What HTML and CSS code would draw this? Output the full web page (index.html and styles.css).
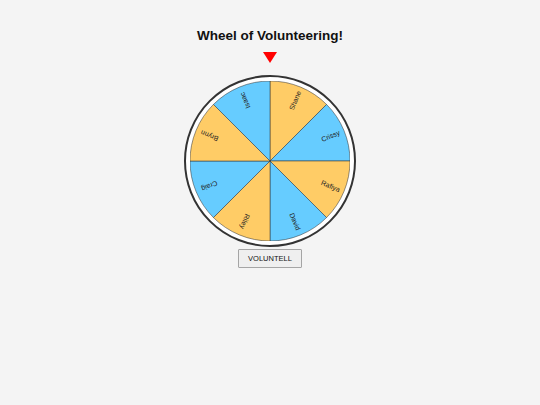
FILE: index.html
```html
<!doctype html>
<html lang="en">
	<head>
		<title>Wheel of Volunteering</title>
		<link rel="stylesheet" href="styles.css">
	</head>
	<body>
		<div class="app">
			<h1>Wheel of Volunteering!</h1>
			<div class="pointer"></div>

			<div class="wheel-frame">
				<svg class="wheel" viewBox="-80 -80 160 160" width="160" height="160">
					<g class="slices">
						<path class="orange" d="M0 0 L0 -80 A80 80 0 0 1 56.569 -56.569 Z"/>
						<path class="blue" d="M0 0 L56.569 -56.569 A80 80 0 0 1 80 0 Z"/>
						<path class="orange" d="M0 0 L80 0 A80 80 0 0 1 56.569 56.569 Z"/>
						<path class="blue" d="M0 0 L56.569 56.569 A80 80 0 0 1 0 80 Z"/>
						<path class="orange" d="M0 0 L0 80 A80 80 0 0 1 -56.569 56.569 Z"/>
						<path class="blue" d="M0 0 L-56.569 56.569 A80 80 0 0 1 -80 0 Z"/>
						<path class="orange" d="M0 0 L-80 0 A80 80 0 0 1 -56.569 -56.569 Z"/>
						<path class="blue" d="M0 0 L-56.569 -56.569 A80 80 0 0 1 0 -80 Z"/>
					</g>
					<!-- names sit in the middle of each slice, reading outwards -->
					<g class="names">
						<text transform="rotate(-67.5) translate(65.5 0)">Shane</text>
						<text transform="rotate(-22.5) translate(65.5 0)">Crissy</text>
						<text transform="rotate(22.5) translate(65.5 0)">Rafiya</text>
						<text transform="rotate(67.5) translate(65.5 0)">David</text>
						<text transform="rotate(112.5) translate(65.5 0)">Riley</text>
						<text transform="rotate(157.5) translate(65.5 0)">Craig</text>
						<text transform="rotate(202.5) translate(65.5 0)">Brynn</text>
						<text transform="rotate(247.5) translate(65.5 0)">Isaac</text>
					</g>
				</svg>
			</div>

			<button class="spin" type="button">VOLUNTELL</button>
		</div>
	</body>
</html>
```

FILE: styles.css
```css
body {
	margin: 0;
	background: #f4f4f4;
	font-family: "Liberation Sans", Arial, sans-serif;
	color: #111;
}

.app {
	display: flex;
	flex-direction: column;
	align-items: center;
	padding-top: 28px;
}

h1 {
	margin: 0;
	font-size: 13.5px;
	line-height: 16px;
	font-weight: bold;
}

.pointer {
	width: 0;
	height: 0;
	margin-top: 8px;
	border-left: 7.5px solid transparent;
	border-right: 7.5px solid transparent;
	border-top: 11px solid #f00;
}

.wheel-frame {
	box-sizing: border-box;
	width: 172px;
	height: 172px;
	margin-top: 12px;
	padding: 3.5px;
	border: 2.5px solid #333;
	border-radius: 50%;
	background: #fff;
}

.wheel {
	display: block;
}

.slices path {
	stroke: rgba(50, 50, 50, 0.75);
	stroke-width: 0.7;
}

.orange {
	fill: #ffcc66;
}

.blue {
	fill: #66ccff;
}

.names text {
	font-family: "Liberation Sans", Arial, sans-serif;
	font-size: 7px;
	fill: #222;
	text-anchor: middle;
	dominant-baseline: central;
}

.spin {
	margin-top: 2px;
	padding: 4px 9px;
	font-family: "Liberation Sans", Arial, sans-serif;
	font-size: 7.5px;
	line-height: 9px;
	color: #111;
	background: #efefef;
	border: 1px solid #a5a5a5;
	border-radius: 1px;
}
```
